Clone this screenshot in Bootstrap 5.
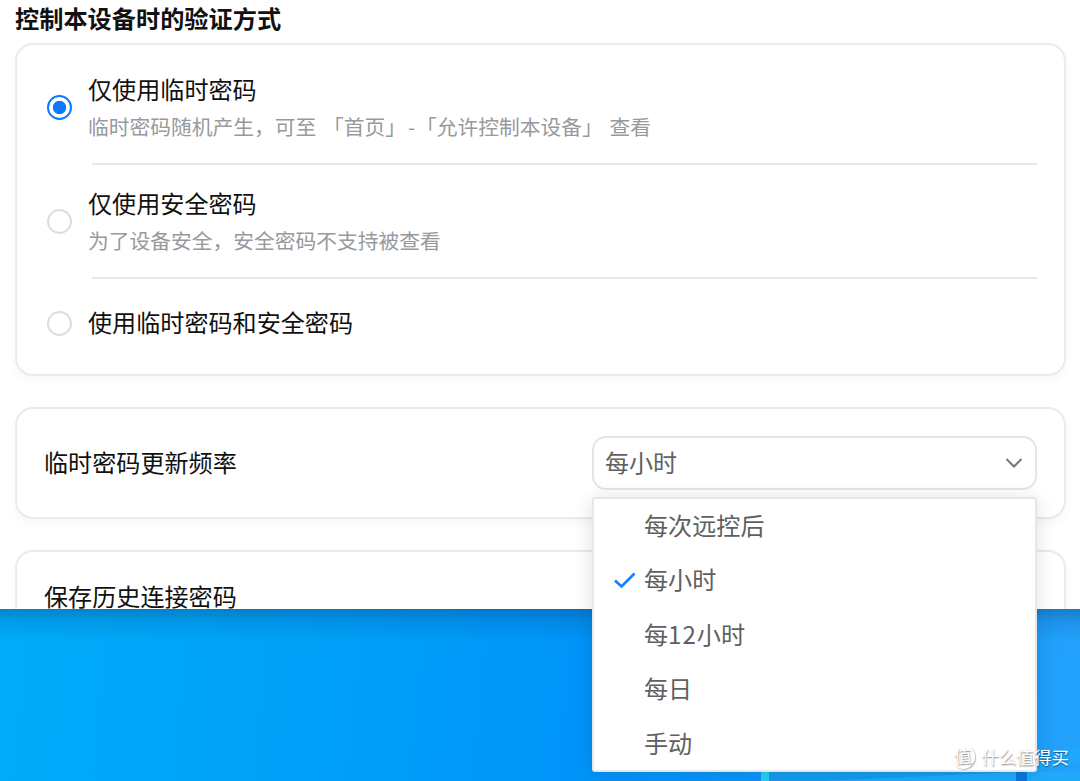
<!DOCTYPE html>
<html lang="zh-CN">
<head>
<meta charset="utf-8">
<meta name="viewport" content="width=device-width, initial-scale=1">
<title>安全设置</title>
<link rel="stylesheet" href="https://cdn.jsdelivr.net/npm/bootstrap@5.3.0/dist/css/bootstrap.min.css">
<style>
body{font-family:"Noto Sans CJK SC",sans-serif;font-size:24.1px;line-height:40px;color:#111;height:781px}
.app-window{height:609px;padding:0 14px 0 15px}
.page-title{font-size:24.2px;line-height:36px;font-weight:700;height:43px;margin:0}
.panel{border:2px solid #ebebeb;border-radius:18px;background:#fff;box-shadow:0 4px 8px rgba(0,0,0,.035)}
.auth-panel{height:333px;padding:25px 27px 0 30px;margin-bottom:31px}
.freq-panel{height:112px;padding:0 27px;margin-bottom:31px}
.history-panel{height:120px;padding:24px 27px}
.option{gap:16px}
.option>span,.freq-label,.select-box span{margin:-1px 0 1px}
.option .form-check-input{width:25px;height:25px;margin:0;border:2px solid #dcdddd;flex:none;box-shadow:none}
.option .form-check-input:checked{background:radial-gradient(circle,#0a7aff 0 6.3px,#fff 7.1px);border-color:#0a7aff}
.hint{font-size:20.75px;line-height:34px;color:#98999c;word-spacing:2px}
.dash{padding:0 1px 0 2px}
.rule{height:2px;background:#e7e7e7;margin:19px 0 19px 45px}
.select-box{width:445px;height:54px;border:2px solid #e5e5e5;border-radius:14px;padding:0 12px 0 11px;background:#fff;color:#606060;font-size:24px}
.select-menu{top:61px;left:0;width:445px;height:275px;border:2px solid #e6e7ec;border-radius:3px;background:#fff;box-shadow:0 2px 20px rgba(0,0,0,.12);z-index:5;color:#606060;font-size:24.1px}
.select-menu li{height:54.5px;padding:0 0 3px 20px}
.tick{width:22px;height:22px;margin:2px 8px 0 0;flex:none}
.digits{letter-spacing:1px}
.desktop{height:172px;background:linear-gradient(180deg,rgba(0,50,100,.32),rgba(0,50,100,.13) 12px,transparent 32px),linear-gradient(96deg,#00acfa 0,#00a1f8 28%,#0094f8 54%,#1297f8 78%,#23a2fd 100%)}
.watermark{right:11px;bottom:10px;z-index:9;height:29px;color:#fff;font-size:17.5px;line-height:29px;gap:7px;text-shadow:.5px 1px 1.5px rgba(0,0,0,.5)}
.watermark .seal{width:24px;height:24px;line-height:22px;border-radius:50%;text-align:center;transform:rotate(-4deg);box-shadow:1px 1px 1px rgba(0,0,0,.25)}
</style>
</head>
<body class="position-relative overflow-hidden bg-white">
<main class="app-window">
  <h1 class="page-title">控制本设备时的验证方式</h1>
  <section class="panel auth-panel">
    <label class="option d-flex align-items-center">
      <input class="form-check-input" type="radio" name="auth" checked>
      <span><span class="d-block">仅使用临时密码</span><span class="d-block hint">临时密码随机产生，可至 「首页」<span class="dash">-</span>「允许控制本设备」 查看</span></span>
    </label>
    <div class="rule"></div>
    <label class="option d-flex align-items-center">
      <input class="form-check-input" type="radio" name="auth">
      <span><span class="d-block">仅使用安全密码</span><span class="d-block hint">为了设备安全，安全密码不支持被查看</span></span>
    </label>
    <div class="rule mb-4"></div>
    <label class="option d-flex align-items-center">
      <input class="form-check-input" type="radio" name="auth">
      <span>使用临时密码和安全密码</span>
    </label>
  </section>
  <section class="panel freq-panel d-flex align-items-center justify-content-between">
    <span class="freq-label">临时密码更新频率</span>
    <div class="position-relative">
      <div class="select-box d-flex align-items-center justify-content-between">
        <span>每小时</span>
        <svg width="18" height="12" viewBox="0 0 18 12" fill="none" stroke="#777" stroke-width="2"><path d="M1.500 2 9 9.500 16.500 2"/></svg>
      </div>
      <ul class="select-menu position-absolute list-unstyled m-0">
        <li class="d-flex align-items-center"><span class="tick"></span>每次远控后</li>
        <li class="d-flex align-items-center"><svg class="tick" viewBox="0 0 22 22" fill="none" stroke="#1380ff" stroke-width="2.700"><path d="M1 11.500 7.500 17.500 20.500 4.500"/></svg>每小时</li>
        <li class="d-flex align-items-center"><span class="tick"></span>每<span class="digits">12</span>小时</li>
        <li class="d-flex align-items-center"><span class="tick"></span>每日</li>
        <li class="d-flex align-items-center"><span class="tick"></span>手动</li>
      </ul>
    </div>
  </section>
  <section class="panel history-panel">保存历史连接密码</section>
</main>
<div class="desktop position-relative overflow-hidden">
  <svg class="d-block" width="1080" height="172" viewBox="0 0 1080 172">
    <path d="M762 163H1016V172H762Z" fill="#149ced"/>
    <path d="M820 172 1016 163H1080V172Z" fill="#20aafa"/>
    <path d="M1037 149 1080 139V153L1037 162Z" fill="#1ba9fc" opacity=".7"/>
    <path d="M761 163h8v9h-8z" fill="#23d0f5"/>
    <path d="M1016 163h11v9h-11z" fill="#0879dc"/>
  </svg>
</div>
<div class="watermark position-absolute d-flex align-items-center"><span class="seal">值</span><span>什么值得买</span></div>
<script src="https://cdn.jsdelivr.net/npm/bootstrap@5.3.0/dist/js/bootstrap.bundle.min.js"></script>
</body>
</html>
